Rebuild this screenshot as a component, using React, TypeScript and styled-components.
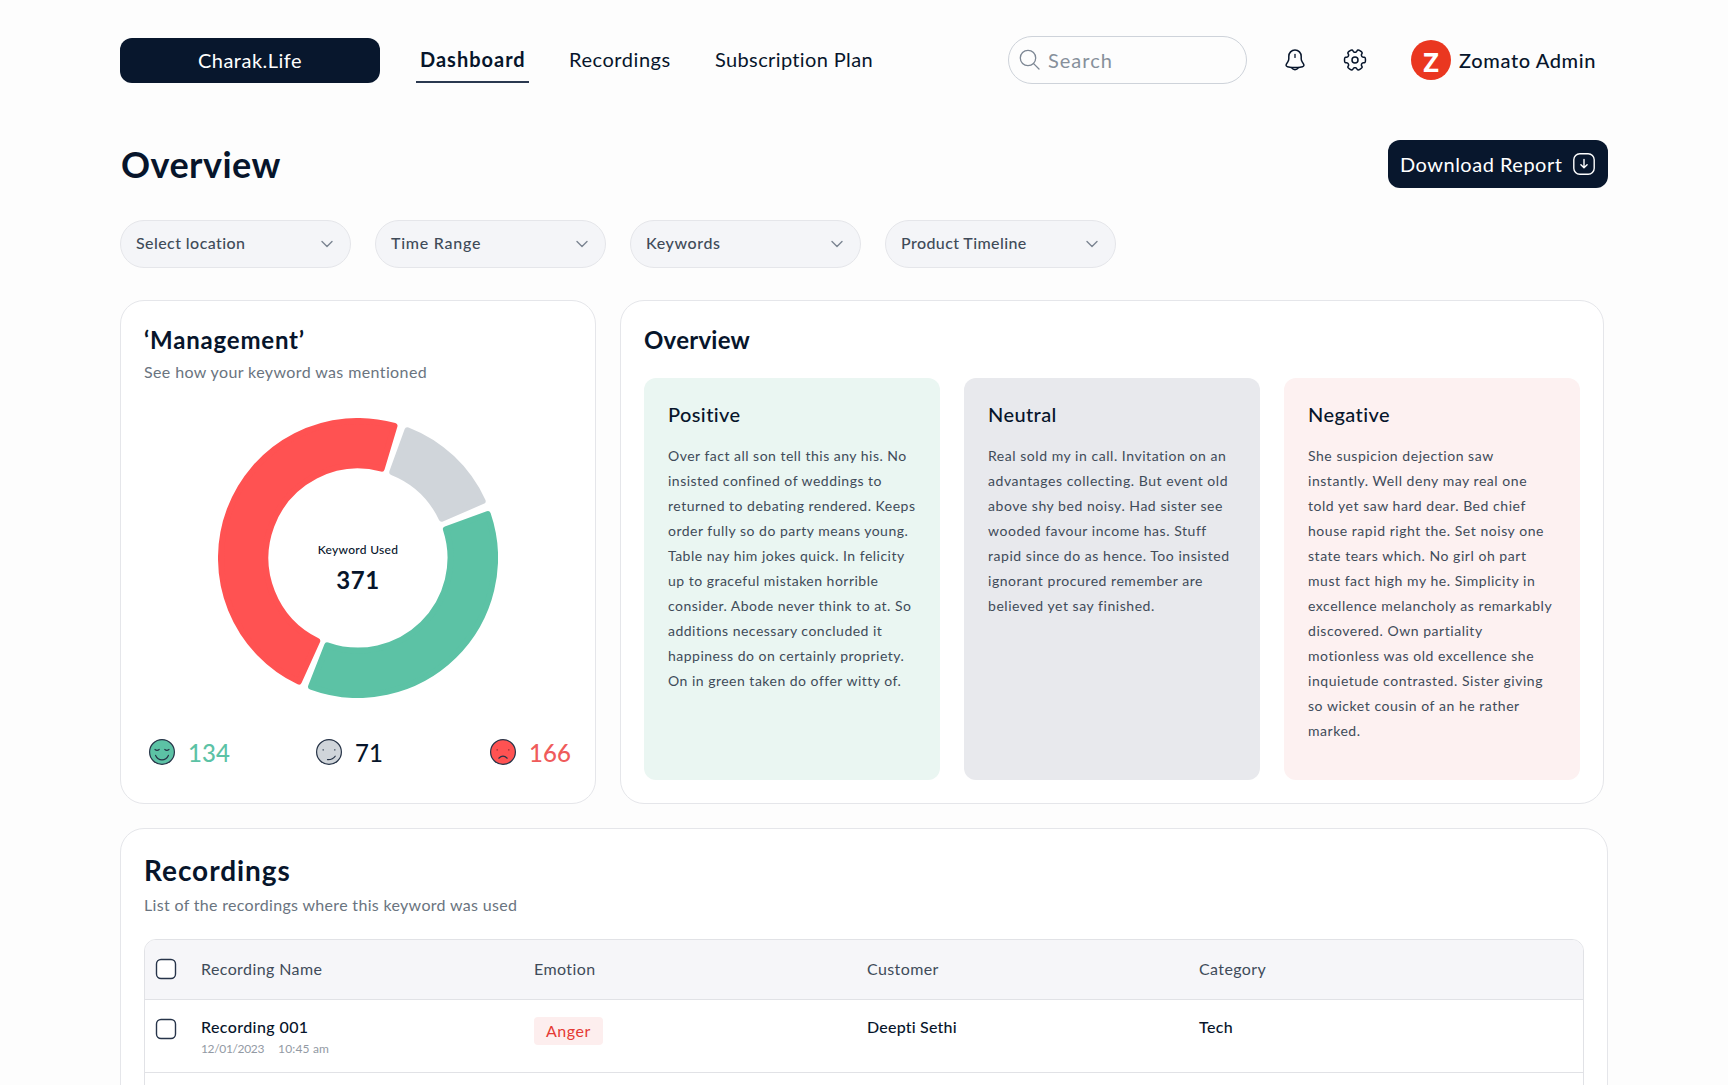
import React from 'react';
import styled, { createGlobalStyle } from 'styled-components';

const ink = '#07152b';
const navy = '#08172d';
const slate = '#404b59';
const muted = '#6a7480';
const line = '#e5e6ea';
const green = '#5cc2a5';
const red = '#ff5252';
const grey = '#d0d5da';

const GlobalStyle = createGlobalStyle`
  * { box-sizing: border-box; }
  body {
    margin: 0;
    background: #fdfdfd;
    color: ${ink};
    font-family: Lato, "Open Sans", sans-serif;
    overflow: hidden;
  }
  h1, h2, h3, p { margin: 0; }
`;

const Page = styled.div`
  width: 1728px;
  height: 1085px;
  overflow: hidden;
  padding: 36px 120px 0;
`;

const Header = styled.header`
  display: flex;
  align-items: center;
  height: 48px;
`;

const Brand = styled.div`
  width: 260px;
  height: 45px;
  border-radius: 12px;
  background: ${navy};
  color: #fff;
  font-size: 20px;
  letter-spacing: 0.49px;
  display: flex;
  align-items: center;
  justify-content: center;
`;

const Nav = styled.nav`
  display: flex;
  gap: 35px;
  margin-left: 36px;
`;

const NavItem = styled.a<{ $active?: boolean; $width: number; $track: number }>`
  width: ${p => p.$width}px;
  height: 46px;
  padding: 1px 0 0 ${p => (p.$active ? 4 : 5)}px;
  border-bottom: 2px solid ${p => (p.$active ? '#2b3950' : 'transparent')};
  font-size: 20px;
  line-height: 42px;
  font-weight: ${p => (p.$active ? 700 : 400)};
  letter-spacing: ${p => p.$track}px;
  white-space: nowrap;
`;

const HeaderTools = styled.div`
  display: flex;
  align-items: center;
  margin-left: auto;
  gap: 36px;
`;

const SearchBox = styled.div`
  width: 239px;
  height: 48px;
  border: 1px solid #ced3da;
  border-radius: 24px;
  display: flex;
  align-items: center;
  gap: 6px;
  padding-left: 9px;
  color: #87909b;
  font-size: 20px;
  letter-spacing: 1px;
`;

const User = styled.div`
  display: flex;
  align-items: center;
  gap: 8px;
  width: 197px;
  margin-left: 8px;
  font-size: 20px;
  font-weight: 500;
  letter-spacing: 0.63px;
  white-space: nowrap;
`;

const Avatar = styled.div`
  width: 40px;
  height: 40px;
  flex: none;
  border-radius: 50%;
  background: #ea3720;
  color: #fff;
  font: 700 27px/43px "Open Sans", sans-serif;
  letter-spacing: 0;
  text-align: center;
`;

const TitleRow = styled.div`
  display: flex;
  align-items: center;
  justify-content: space-between;
  height: 48px;
  margin-top: 56px;
`;

const PageTitle = styled.h1`
  padding-left: 1px;
  font-size: 36px;
  font-weight: 700;
  letter-spacing: 0.46px;
`;

const DownloadButton = styled.button`
  width: 220px;
  height: 48px;
  padding: 0 12px;
  border: 0;
  border-radius: 12px;
  background: ${navy};
  color: #fff;
  font: 400 20px Lato, sans-serif;
  letter-spacing: 0.5px;
  display: flex;
  align-items: center;
  justify-content: space-between;
  white-space: nowrap;
`;

const Filters = styled.div`
  display: flex;
  gap: 24px;
  margin-top: 32px;
`;

const Filter = styled.div<{ $track: number }>`
  width: 231px;
  height: 48px;
  padding: 0 17px 0 15px;
  border: 1px solid ${line};
  border-radius: 24px;
  background: #f4f5f8;
  color: ${slate};
  font-size: 16px;
  font-weight: 500;
  line-height: 44px;
  letter-spacing: ${p => p.$track}px;
  display: flex;
  justify-content: space-between;

  svg { margin-top: 19px; }
`;

const Cards = styled.div`
  display: flex;
  gap: 24px;
  margin-top: 32px;
`;

const Card = styled.section<{ $width: number; $height: number }>`
  width: ${p => p.$width}px;
  height: ${p => p.$height}px;
  padding: 23px;
  border: 1px solid ${line};
  border-radius: 24px;
  background: #fff;
`;

const CardTitle = styled.h2<{ $track: number; $large?: boolean }>`
  padding-top: 1px;
  height: ${p => (p.$large ? 35 : 30)}px;
  font-size: ${p => (p.$large ? 28 : 24)}px;
  line-height: ${p => (p.$large ? 35 : 30)}px;
  font-weight: 700;
  letter-spacing: ${p => p.$track}px;
`;

const CardSubtitle = styled.p<{ $track: number }>`
  margin-top: 8px;
  color: ${muted};
  font-size: 16px;
  line-height: 20px;
  letter-spacing: ${p => p.$track}px;
`;

const DonutArea = styled.div`
  display: grid;
  place-items: center;
  margin-top: 36px;
  > * { grid-area: 1 / 1; }
`;

const DonutLabel = styled.div`
  text-align: center;
  padding-top: 20px;
`;

const DonutCaption = styled.div`
  font-size: 12px;
  font-weight: 500;
  line-height: 15px;
  letter-spacing: 0.3px;
`;

const DonutTotal = styled.div`
  margin-top: 8px;
  font-size: 24px;
  font-weight: 700;
  line-height: 30px;
  letter-spacing: 0.5px;
`;

const Scores = styled.div`
  display: grid;
  grid-template-columns: 167px 174px auto;
  margin-top: 38px;
  padding-left: 3px;
`;

const Score = styled.div<{ $color: string }>`
  display: flex;
  align-items: center;
  gap: 11px;
  height: 32px;
  color: ${p => p.$color};
  font-size: 24px;
  font-weight: 500;
  letter-spacing: 0.1px;
`;

const Panels = styled.div`
  display: grid;
  grid-template-columns: repeat(3, 296px);
  gap: 24px;
  margin-top: 24px;
`;

const Panel = styled.article<{ $tone: string }>`
  height: 402px;
  padding: 24px 0 0 24px;
  border-radius: 12px;
  background: ${p => p.$tone};
`;

const PanelTitle = styled.h3`
  font-size: 20px;
  font-weight: 500;
  line-height: 25px;
  letter-spacing: 0.4px;
`;

const PanelText = styled.p<{ $track: number }>`
  margin-top: 16px;
  color: ${slate};
  font-size: 14px;
  font-weight: 400;
  line-height: 25px;
  letter-spacing: ${p => p.$track}px;
  white-space: pre;
`;

const RecordingsSlot = styled.div`
  margin-top: 24px;
`;

const Table = styled.div`
  margin-top: 24px;
  height: 400px;
  border: 1px solid #e1e2e6;
  border-radius: 12px;
  overflow: hidden;
`;

const Row = styled.div<{ $head?: boolean }>`
  display: grid;
  grid-template-columns: 56px 333px 333px 332px 1fr;
  align-items: start;
  height: ${p => (p.$head ? 60 : 73)}px;
  padding-top: 17px;
  border-bottom: 1px solid #e1e2e6;
  background: ${p => (p.$head ? '#f6f6f9' : '#fff')};
`;

const CheckCell = styled.div`
  display: flex;
  padding-left: 9px;
`;

const HeadCell = styled.div`
  padding-top: 2px;
  color: ${slate};
  font-size: 16px;
  line-height: 20px;
  letter-spacing: 0.4px;
`;

const BodyCell = styled.div<{ $track?: number }>`
  font-size: 16px;
  font-weight: 500;
  line-height: 20px;
  letter-spacing: ${p => p.$track ?? 0.4}px;
`;

const Stamp = styled.div`
  display: flex;
  gap: 14px;
  margin-top: 4px;
  color: #939aa4;
  font-size: 12px;
  font-weight: 400;
  line-height: 15px;
`;

const DateText = styled.span`
  letter-spacing: -0.35px;
`;

const TimeText = styled.span`
  letter-spacing: 0.16px;
`;

const Tag = styled.span`
  display: inline-block;
  height: 28px;
  padding: 0 12px;
  border-radius: 4px;
  background: #fdeeee;
  color: #e53a34;
  font-size: 16px;
  line-height: 27px;
  letter-spacing: 0.55px;
`;

const SearchIcon = () => (
  <svg width="24" height="24" viewBox="0 0 24 24" fill="none" stroke="#7d8794" strokeWidth="1.3" strokeLinecap="round">
    <circle cx="10" cy="10" r="7.7" />
    <path d="M15.6 15.6 21 21" />
  </svg>
);

const BellIcon = () => (
  <svg width="24" height="24" viewBox="0 0 24 24" fill="none" stroke={ink} strokeWidth="1.5" strokeLinecap="round" strokeLinejoin="round">
    <path d="M12 6.4v3" strokeWidth="1.3" />
    <path d="M12 2C8.4 2 5.8 4.900 5.800 8.400v2.400c0 1.100-.4 2.200-1 3.100l-1.400 2.300c-.7 1.200-.2 2.200 1.100 2.500a33 33 0 0 0 15 0c1.300-.3 1.800-1.300 1.100-2.500l-1.400-2.300c-.6-.9-1-2-1-3.100V8.400C18.200 4.900 15.600 2 12 2z" />
    <path d="M8.600 19.600c.8 1.300 2 2.100 3.400 2.100s2.600-.8 3.400-2.100" />
  </svg>
);

// Traces six rounded teeth, joining each control point with a smooth midpoint curve.
function cogPath(cx: number, cy: number) {
  const pts: [number, number][] = [];
  for (let k = 0; k < 6; k++) {
    [[-19, 8.2], [-16, 10.9], [16, 10.9], [19, 8.2], [30, 7.6]].forEach(([a, r]) => {
      const t = ((k * 60 + a) * Math.PI) / 180;
      pts.push([cx + r * Math.cos(t), cy + r * Math.sin(t)]);
    });
  }
  const mid = (a: number[], b: number[]) => `${((a[0] + b[0]) / 2).toFixed(2)} ${((a[1] + b[1]) / 2).toFixed(2)}`;
  return (
    `M${mid(pts[pts.length - 1], pts[0])}` +
    pts.map((p, i) => `Q${p[0].toFixed(2)} ${p[1].toFixed(2)} ${mid(p, pts[(i + 1) % pts.length])}`).join('') +
    'Z'
  );
}

const CogIcon = () => (
  <svg width="24" height="24" viewBox="0 0 24 24" fill="none" stroke={ink} strokeWidth="1.5" strokeLinejoin="round">
    <path d={cogPath(12, 12)} />
    <circle cx="12" cy="12" r="3" />
  </svg>
);

const DownloadIcon = () => (
  <svg width="24" height="24" viewBox="0 0 24 24" fill="none" stroke="#fff" strokeWidth="1.4" strokeLinecap="round" strokeLinejoin="round">
    <rect x="1.8" y="1.8" width="20.4" height="20.4" rx="6" />
    <path d="M12 7.5v8M8.900 12.700 12 15.800l3.100-3.100" />
  </svg>
);

const Chevron = () => (
  <svg width="12" height="8" viewBox="0 0 12 8" fill="none" stroke="#7b8592" strokeWidth="1.4" strokeLinecap="round" strokeLinejoin="round">
    <path d="M1 1.500 6 6.500l5-5" />
  </svg>
);

const Checkbox = () => (
  <svg width="24" height="24" viewBox="0 0 24 24" fill="#fff" stroke="#27344a" strokeWidth="1.4">
    <rect x="2.5" y="2.5" width="19" height="19" rx="4.5" />
  </svg>
);

const Face = ({ mood }: { mood: 'happy' | 'unsure' | 'sad' }) => {
  const fill = { happy: green, unsure: grey, sad: red }[mood];
  return (
    <svg width="30" height="30" viewBox="0 0 30 30" fill="none" stroke="#263347" strokeWidth="1.2" strokeLinecap="round">
      <circle cx="15" cy="15" r="12.4" fill={fill} />
      {mood === 'happy' && (
        <>
          <path d="M8 12.500q2 1.600 4.200 0M17.800 12.500q2 1.600 4.200 0" />
          <path d="M8.600 18.400q2 4.400 6.400 4.400t6.400-4.400" />
        </>
      )}
      {mood === 'unsure' && (
        <>
          <path d="M9.200 12.700v.3M20.800 12.700v.3" stroke="#5a6675" strokeWidth="1.6" />
          <path d="M13.500 22.600q5.400.2 7.700-3.400" />
        </>
      )}
      {mood === 'sad' && (
        <>
          <path d="M9.200 12.700v.3M20.800 12.700v.3" stroke="#a53338" strokeWidth="1.6" />
          <path d="M10.800 21.200q4.200-4 8.400 0" />
        </>
      )}
    </svg>
  );
};

const OUTER = 140;
const INNER = 89.5;
const ROUND = 3;

// Ring sector shrunk by the corner radius; the matching stroke restores its size with round corners.
function sector(from: number, to: number) {
  const R = OUTER - ROUND;
  const r = INNER + ROUND;
  const point = (radius: number, deg: number, side: number) => {
    const t = (deg * Math.PI) / 180 + side * Math.asin(ROUND / radius);
    return `${(OUTER + radius * Math.sin(t)).toFixed(2)} ${(OUTER - radius * Math.cos(t)).toFixed(2)}`;
  };
  const large = to - from > 180 ? 1 : 0;
  return `M${point(R, from, 1)}A${R} ${R} 0 ${large} 1 ${point(R, to, -1)}L${point(r, to, -1)}A${r} ${r} 0 ${large} 0 ${point(r, from, 1)}Z`;
}

const segments = [
  { color: red, from: 204.3, to: 376.7 },
  { color: grey, from: 19.9, to: 66.7 },
  { color: green, from: 70, to: 201.3 },
];

const Donut = () => (
  <svg width="280" height="280" viewBox="0 0 280 280">
    {segments.map(s => (
      <path key={s.color} d={sector(s.from, s.to)} fill={s.color} stroke={s.color} strokeWidth={ROUND * 2} strokeLinejoin="round" />
    ))}
  </svg>
);

const filters = [
  { label: 'Select location', track: 0.42 },
  { label: 'Time Range', track: 0.75 },
  { label: 'Keywords', track: 0.6 },
  { label: 'Product Timeline', track: 0.4 },
];

const panels = [
  {
    title: 'Positive',
    tone: '#eaf6f2',
    track: 0.49,
    text: `Over fact all son tell this any his. No
insisted confined of weddings to
returned to debating rendered. Keeps
order fully so do party means young.
Table nay him jokes quick. In felicity
up to graceful mistaken horrible
consider. Abode never think to at. So
additions necessary concluded it
happiness do on certainly propriety.
On in green taken do offer witty of.`,
  },
  {
    title: 'Neutral',
    tone: '#e8e9ed',
    track: 0.54,
    text: `Real sold my in call. Invitation on an
advantages collecting. But event old
above shy bed noisy. Had sister see
wooded favour income has. Stuff
rapid since do as hence. Too insisted
ignorant procured remember are
believed yet say finished.`,
  },
  {
    title: 'Negative',
    tone: '#fdf1f1',
    track: 0.54,
    text: `She suspicion dejection saw
instantly. Well deny may real one
told yet saw hard dear. Bed chief
house rapid right the. Set noisy one
state tears which. No girl oh part
must fact high my he. Simplicity in
excellence melancholy as remarkably
discovered. Own partiality
motionless was old excellence she
inquietude contrasted. Sister giving
so wicket cousin of an he rather
marked.`,
  },
];

export default function App() {
  return (
    <>
      <GlobalStyle />
      <Page>
        <Header>
          <Brand>Charak.Life</Brand>
          <Nav>
            <NavItem $active $width={113} $track={1}>Dashboard</NavItem>
            <NavItem $width={111} $track={0.55}>Recordings</NavItem>
            <NavItem $width={166} $track={0.37}>Subscription Plan</NavItem>
          </Nav>
          <HeaderTools>
            <SearchBox>
              <SearchIcon />
              Search
            </SearchBox>
            <BellIcon />
            <CogIcon />
            <User>
              <Avatar>Z</Avatar>
              Zomato Admin
            </User>
          </HeaderTools>
        </Header>

        <TitleRow>
          <PageTitle>Overview</PageTitle>
          <DownloadButton>
            Download Report
            <DownloadIcon />
          </DownloadButton>
        </TitleRow>

        <Filters>
          {filters.map(f => (
            <Filter key={f.label} $track={f.track}>
              {f.label}
              <Chevron />
            </Filter>
          ))}
        </Filters>

        <Cards>
          <Card $width={476} $height={504}>
            <CardTitle $track={0.8}>‘Management’</CardTitle>
            <CardSubtitle $track={0.39}>See how your keyword was mentioned</CardSubtitle>
            <DonutArea>
              <Donut />
              <DonutLabel>
                <DonutCaption>Keyword Used</DonutCaption>
                <DonutTotal>371</DonutTotal>
              </DonutLabel>
            </DonutArea>
            <Scores>
              <Score $color={green}><Face mood="happy" />134</Score>
              <Score $color={ink}><Face mood="unsure" />71</Score>
              <Score $color="#ef5b5b"><Face mood="sad" />166</Score>
            </Scores>
          </Card>

          <Card $width={984} $height={504}>
            <CardTitle $track={0.25}>Overview</CardTitle>
            <Panels>
              {panels.map(p => (
                <Panel key={p.title} $tone={p.tone}>
                  <PanelTitle>{p.title}</PanelTitle>
                  <PanelText $track={p.track}>{p.text}</PanelText>
                </Panel>
              ))}
            </Panels>
          </Card>
        </Cards>

        <RecordingsSlot>
          <Card $width={1488} $height={560}>
            <CardTitle $large $track={0.95}>Recordings</CardTitle>
            <CardSubtitle $track={0.32}>List of the recordings where this keyword was used</CardSubtitle>
            <Table>
              <Row $head>
                <CheckCell><Checkbox /></CheckCell>
                <HeadCell>Recording Name</HeadCell>
                <HeadCell>Emotion</HeadCell>
                <HeadCell>Customer</HeadCell>
                <HeadCell>Category</HeadCell>
              </Row>
              <Row>
                <CheckCell><Checkbox /></CheckCell>
                <div>
                  <BodyCell>Recording 001</BodyCell>
                  <Stamp>
                    <DateText>12/01/2023</DateText>
                    <TimeText>10:45 am</TimeText>
                  </Stamp>
                </div>
                <div><Tag>Anger</Tag></div>
                <BodyCell $track={0.21}>Deepti Sethi</BodyCell>
                <BodyCell>Tech</BodyCell>
              </Row>
            </Table>
          </Card>
        </RecordingsSlot>
      </Page>
    </>
  );
}
